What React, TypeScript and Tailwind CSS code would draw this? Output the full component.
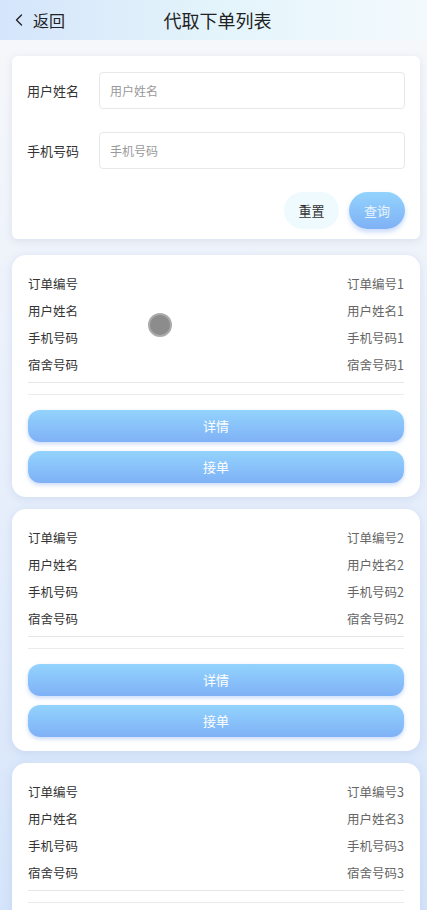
import { ChevronLeft } from "lucide-react";

const ORDERS = [1, 2, 3];

const FONT = { fontFamily: '"Noto Sans CJK SC", "Noto Sans", sans-serif' };

function OrderCard({ n }: { n: number }) {
  const rows = [
    ["订单编号", `订单编号${n}`],
    ["用户姓名", `用户姓名${n}`],
    ["手机号码", `手机号码${n}`],
    ["宿舍号码", `宿舍号码${n}`],
  ];
  return (
    <div className="bg-white rounded-[14px] shadow-[0_2px_10px_rgba(120,150,200,0.2)] px-4 pt-4 pb-[14px]">
      {rows.map(([label, value]) => (
        <div key={label} className="h-[27px] flex items-center justify-between text-[12.5px]">
          <span className="text-[#333]">{label}</span>
          <span className="text-[#666]">{value}</span>
        </div>
      ))}
      <div className="mt-[3px] h-px bg-[#e6e6e6]" />
      <div className="mt-[11px] h-px bg-[#ececec]" />
      <div className="mt-[15px] flex flex-col gap-[9px]">
        <button className="h-[32px] rounded-[12px] bg-gradient-to-b from-[#93d3fd] to-[#7fb1f6] text-white text-[13px] shadow-[0_2px_4px_rgba(100,150,240,0.35)]">
          详情
        </button>
        <button className="h-[32px] rounded-[12px] bg-gradient-to-b from-[#93d3fd] to-[#7fb1f6] text-white text-[13px] shadow-[0_2px_4px_rgba(100,150,240,0.35)]">
          接单
        </button>
      </div>
    </div>
  );
}

export default function App() {
  return (
    <div
      className="relative min-h-[910px] bg-gradient-to-b from-[#f7f8fa] via-[#e6eefb] to-[#cfe1fa] pb-10"
      style={FONT}
    >
      <div className="h-10 flex items-center relative bg-gradient-to-r from-[#d5e5fb] via-[#e3f4fb] to-[#f3fafe]">
        <div className="flex items-center pl-[9px] text-[#222]">
          <ChevronLeft size={20} strokeWidth={1.6} />
          <span className="ml-[4px] text-[16px]">返回</span>
        </div>
        <div className="absolute left-[8px] right-0 text-center text-[18px] text-[#222] pointer-events-none">
          代取下单列表
        </div>
      </div>

      <div className="pl-3 pr-[7px] pt-4 flex flex-col">
        <div className="bg-white rounded-md shadow-[0_2px_8px_rgba(120,140,180,0.18)] pt-4 pb-[10px] pl-[15px] pr-[15px]">
          <div className="flex items-center">
            <span className="w-[72px] text-[13px] text-[#333]">用户姓名</span>
            <input
              placeholder="用户姓名"
              className="flex-1 h-[37px] border border-[#e8e8e8] rounded px-[10px] text-[12px] placeholder-[#999] outline-none"
            />
          </div>
          <div className="flex items-center mt-[23px]">
            <span className="w-[72px] text-[13px] text-[#333]">手机号码</span>
            <input
              placeholder="手机号码"
              className="flex-1 h-[37px] border border-[#e8e8e8] rounded px-[10px] text-[12px] placeholder-[#999] outline-none"
            />
          </div>
          <div className="flex justify-end gap-[10px] mt-[23px]">
            <button className="w-[55px] h-[37px] rounded-full bg-[#eefafd] text-[13px] text-[#333]">
              重置
            </button>
            <button className="w-[56px] h-[37px] rounded-full bg-gradient-to-b from-[#93d3fd] to-[#7fb1f6] text-[13px] text-[#e8f4ff] shadow-[0_3px_5px_rgba(100,150,240,0.35)]">
              查询
            </button>
          </div>
        </div>

        <div className="mt-4 flex flex-col gap-3">
          {ORDERS.map((n) => (
            <OrderCard key={n} n={n} />
          ))}
        </div>
      </div>

      <div className="absolute left-[148px] top-[313px] w-6 h-6 rounded-full bg-[#8c8c8c] border-2 border-[#aaaaaa] blur-[0.5px]" />
    </div>
  );
}
